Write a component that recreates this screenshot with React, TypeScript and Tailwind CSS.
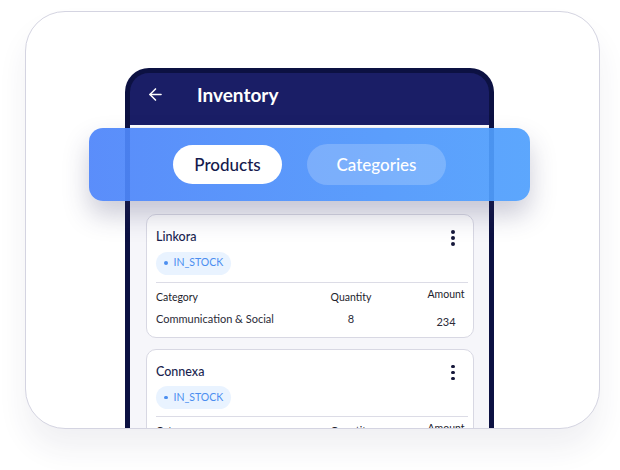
import { ArrowLeft } from "lucide-react";

type Product = {
  name: string;
  status: string;
  category: string;
  quantity: number;
  amount: number;
};

const products: Product[] = [
  { name: "Linkora", status: "IN_STOCK", category: "Communication & Social", quantity: 8, amount: 234 },
  { name: "Connexa", status: "IN_STOCK", category: "Communication & Social", quantity: 12, amount: 180 },
];

const MoreDots = () => (
  <div className="flex flex-col items-center gap-[2.5px] w-[10px] pt-[1px]">
    <span className="w-[3.5px] h-[3.5px] rounded-full bg-[#15173a]" />
    <span className="w-[3.5px] h-[3.5px] rounded-full bg-[#15173a]" />
    <span className="w-[3.5px] h-[3.5px] rounded-full bg-[#15173a]" />
  </div>
);

const ProductCard = ({ product }: { product: Product }) => (
  <div className="bg-white rounded-[10px] border border-[#d8d8e3] pl-[9px] pr-[5px] pt-[14px] pb-[9px]">
    <div className="flex items-start justify-between">
      <span className="text-[12.5px] leading-[16px] font-medium text-[#1a1f4f]">
        {product.name}
      </span>
      <div className="mr-[10px]">
        <MoreDots />
      </div>
    </div>
    <div className="mt-[6px] inline-flex items-center gap-[6px] h-[23px] px-[8px] rounded-full bg-[#e9f3ff] text-[10.5px] text-[#4b8ef0]">
      <span className="w-[3.5px] h-[3.5px] rounded-full bg-[#4b8ef0]" />
      {product.status}
    </div>
    <div className="mt-[7px] border-t border-[#dcdce6]" />
    <div className="grid grid-cols-[1fr_60px_44px] gap-x-[43px] pt-[8px] text-[#1d1d2b]">
      <div className="flex flex-col gap-[8px]">
        <span className="text-[10.5px] leading-[13px]">Category</span>
        <span className="text-[11px] leading-[13px] text-[#2b2b38]">{product.category}</span>
      </div>
      <div className="flex flex-col gap-[8px] items-center">
        <span className="text-[10.5px] leading-[13px]">Quantity</span>
        <span className="text-[11px] leading-[13px] text-[#2b2b38]">{product.quantity}</span>
      </div>
      <div className="flex flex-col gap-[14px] items-center -mt-[3px]">
        <span className="text-[10.5px] leading-[13px]">Amount</span>
        <span className="text-[11px] leading-[13px] text-[#2b2b38]">{product.amount}</span>
      </div>
    </div>
  </div>
);

export default function App() {
  return (
    <div
      className="w-[620px] h-[470px] bg-white pt-[11px] pl-[25px]"
      style={{ fontFamily: "Lato, 'Noto Sans', sans-serif" }}
    >
      <div className="relative w-[575px] h-[418px] rounded-[40px] border border-[#d4d4e1] bg-white overflow-hidden shadow-[0_20px_30px_rgba(40,40,90,0.07)]">
        {/* phone */}
        <div className="ml-[99px] mt-[56px] w-[369px] rounded-t-[24px] border-x-[5px] border-t-[5px] border-[#0c1142] bg-[#1a1e66] overflow-hidden">
          <div className="h-[52px] flex items-start pt-[9px] pl-[16px] gap-[32px]">
            <ArrowLeft size={19} strokeWidth={2} className="text-white mt-[3px]" />
            <span className="text-[19px] leading-[25px] font-bold text-white">Inventory</span>
          </div>
          <div className="h-[2px] bg-white" />
          <div className="bg-[#f6f6fa] pt-[87px] pl-[16px] pr-[15px] flex flex-col gap-[11px] pb-[20px]">
            {products.map((p) => (
              <ProductCard key={p.name} product={p} />
            ))}
          </div>
        </div>

        {/* tab banner */}
        <div className="absolute left-[63px] top-[116px] w-[441px] h-[73px] rounded-[14px] bg-linear-to-r from-[rgba(78,133,250,0.93)] to-[rgba(80,160,253,0.93)] shadow-[0_14px_26px_rgba(50,50,100,0.25)] flex items-center justify-center gap-[25px]">
          <div className="h-[39px] w-[109px] rounded-full bg-white flex items-center justify-center text-[17px] font-medium text-[#151a4d]">
            Products
          </div>
          <div className="h-[41px] w-[139px] rounded-full bg-white/20 flex items-center justify-center text-[17px] font-medium text-white">
            Categories
          </div>
        </div>
      </div>
    </div>
  );
}
